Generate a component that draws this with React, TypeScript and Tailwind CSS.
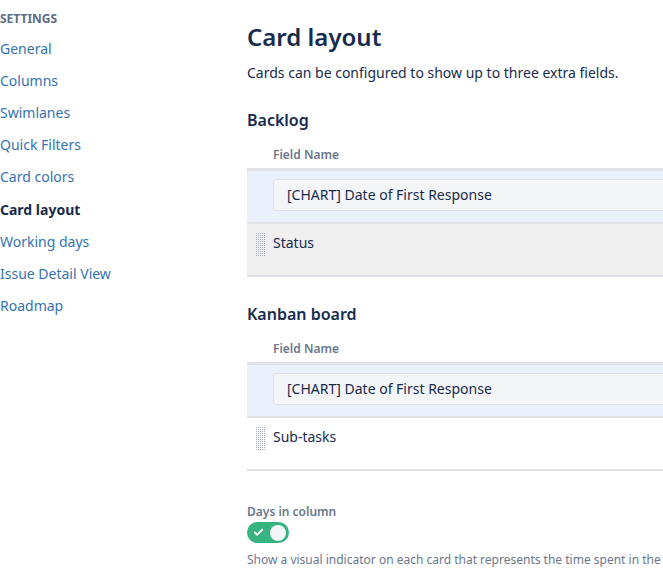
import { Check } from "lucide-react";

const navItems = [
  "General",
  "Columns",
  "Swimlanes",
  "Quick Filters",
  "Card colors",
  "Card layout",
  "Working days",
  "Issue Detail View",
  "Roadmap",
];

function DragHandle() {
  return (
    <svg width="9" height="24" viewBox="0 0 9 24" className="shrink-0">
      <defs>
        <pattern id="dots" width="2" height="2" patternUnits="userSpaceOnUse">
          <rect x="0" y="0" width="1" height="1" fill="#a5adba" />
        </pattern>
      </defs>
      <rect x="0" y="0" width="9" height="24" fill="url(#dots)" />
    </svg>
  );
}

type FieldTableProps = {
  selected: string;
  other: string;
  hovered?: boolean;
};

function FieldTable({ selected, other, hovered }: FieldTableProps) {
  return (
    <div>
      <p className="pl-[26px] text-xs font-semibold leading-4 text-[#6b778c]">
        Field Name
      </p>

      <div className="mt-[5px] w-[760px] border-t-[3px] border-[#dfe1e6]">
        <div className="bg-[#eaf1fc] pl-[26px] pt-2 pb-[11px]">
          <div className="flex h-8 w-[460px] items-center rounded-[3px] border border-[#dfe1e6] bg-[#f4f5f7] pl-[13px] text-sm text-[#172b4d]">
            {selected}
          </div>
        </div>

        <div
          className={`flex h-[55px] items-start gap-2 border-y-2 border-[#dfe1e6] pl-[9px] pt-[9px] ${
            hovered ? "bg-[#efefef]" : "bg-white"
          }`}
        >
          <DragHandle />
          <span className="text-sm leading-5 text-[#172b4d]">{other}</span>
        </div>
      </div>
    </div>
  );
}

function App() {
  return (
    <div
      className="flex h-[578px] w-[663px] overflow-hidden bg-white"
      style={{ fontFamily: '"Noto Sans", "Open Sans", sans-serif' }}
    >
      <aside className="mt-px w-[247px] shrink-0">
        <div className="flex h-8 items-center pt-1 text-xs font-bold text-[#5e6c84]">
          SETTINGS
        </div>
        {navItems.map((item) => (
          <div
            key={item}
            className={`flex h-[32.1px] items-center text-sm ${
              item === "Card layout"
                ? "font-bold text-[#172b4d]"
                : "text-[#3572b0]"
            }`}
          >
            {item}
          </div>
        ))}
      </aside>

      <main className="min-w-0 flex-1 pt-[23px]">
        <h1 className="text-2xl font-semibold leading-7 text-[#172b4d]">
          Card layout
        </h1>
        <p className="mt-3 text-sm leading-5 text-[#172b4d]">
          Cards can be configured to show up to three extra fields.
        </p>

        <h2 className="mt-[25px] text-base font-semibold leading-6 text-[#172b4d]">
          Backlog
        </h2>
        <div className="mt-[15px]">
          <FieldTable
            selected="[CHART] Date of First Response"
            other="Status"
            hovered
          />
        </div>

        <h2 className="mt-[25px] text-base font-semibold leading-6 text-[#172b4d]">
          Kanban board
        </h2>
        <div className="mt-[15px]">
          <FieldTable
            selected="[CHART] Date of First Response"
            other="Sub-tasks"
          />
        </div>

        <p className="mt-[33px] text-xs font-semibold leading-4 text-[#6b778c]">
          Days in column
        </p>
        <div className="mt-[2px] flex h-[21px] w-[42px] items-center justify-between rounded-full bg-[#36b37e] pl-[6px] pr-[3px]">
          <Check size={11} strokeWidth={4} className="text-white" />
          <span className="h-4 w-4 rounded-full bg-[#f4f5f7]" />
        </div>
        <p className="mt-[9px] whitespace-nowrap text-xs leading-4 text-[#6b778c]">
          Show a visual indicator on each card that represents the time spent in
          the column.
        </p>
      </main>
    </div>
  );
}

export default App;
